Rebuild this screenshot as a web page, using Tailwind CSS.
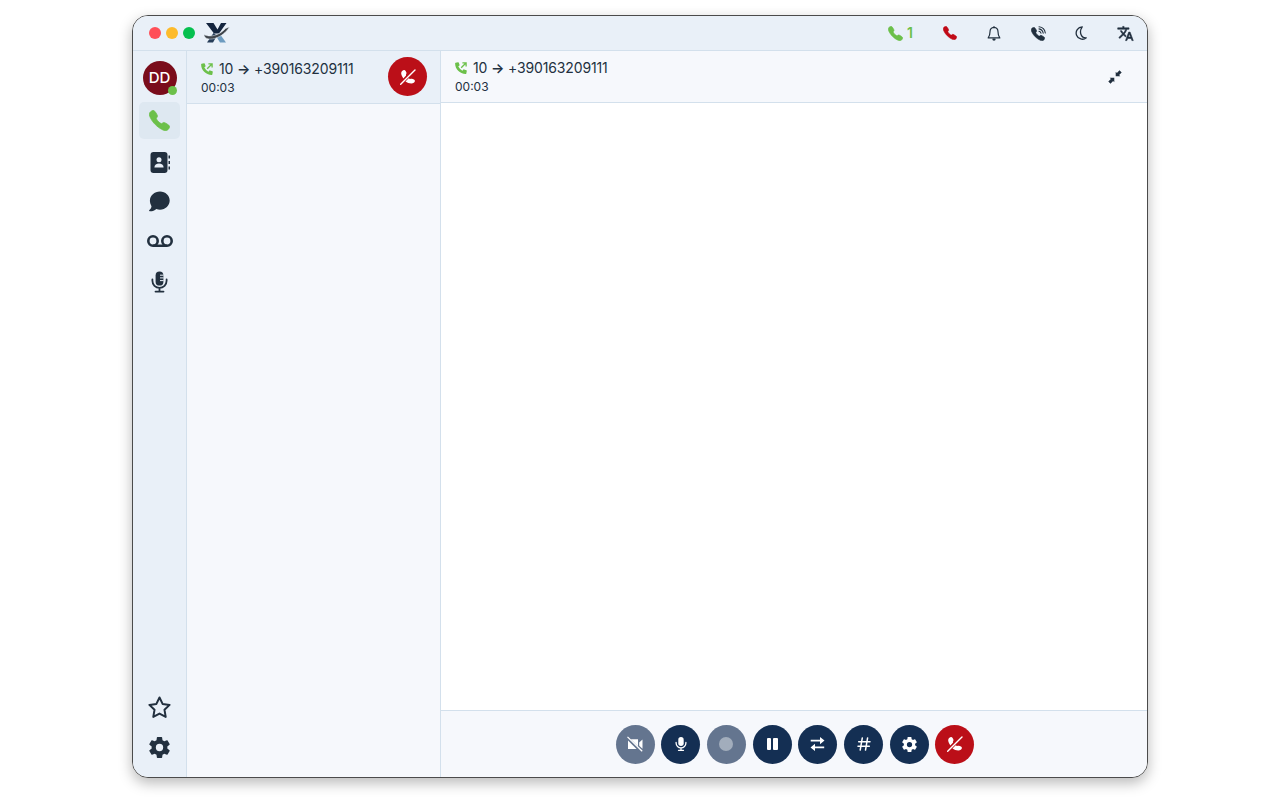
<!DOCTYPE html>
<html lang="en">
  <head>
    <meta charset="UTF-8" />
    <meta name="viewport" content="width=device-width, initial-scale=1.0" />
    <title>Phone</title>
    <script src="https://cdn.jsdelivr.net/npm/@tailwindcss/browser@4"></script>
  </head>
  <body class="h-screen overflow-hidden bg-white font-['Inter',sans-serif] text-[#22303f]">
    <!-- shared icons -->
    <svg class="hidden">
      <symbol id="phone" viewBox="24 24 464 464">
        <path d="M391 480c-19.52 0-46.94-7.06-88-30-49.93-28-88.55-53.85-138.21-103.38C116.91 298.77 93.61 267.79 61 208.45c-36.84-67-30.56-102.12-23.54-117.13C45.82 73.38 58.16 62.65 74.11 52a176.3 176.3 0 0128.64-15.2c1-.43 1.93-.84 2.76-1.21 4.95-2.23 12.45-5.6 21.95-2 6.34 2.38 12 7.25 20.86 16 18.17 17.92 43 57.83 52.16 77.43 6.15 13.21 10.22 21.93 10.23 31.71 0 11.45-5.76 20.28-12.75 29.81-1.31 1.79-2.61 3.5-3.87 5.16-7.61 10-9.28 12.89-8.18 18.05 2.23 10.37 18.86 41.24 46.19 68.51s57.31 42.85 67.72 45.07c5.38 1.15 8.33-.59 18.65-8.47 1.48-1.13 3-2.3 4.59-3.47 10.66-7.93 19.08-13.54 30.26-13.54h.06c9.73 0 18.06 4.22 31.86 11.18 18 9.08 59.11 33.59 77.14 51.78 8.77 8.84 13.66 14.48 16.05 20.81 3.6 9.53.21 17-2 22-.37.83-.78 1.74-1.21 2.75a176.49 176.49 0 01-15.29 28.58c-10.63 15.9-21.4 28.21-39.38 36.58A67.42 67.42 0 01391 480z" stroke="currentColor" stroke-width="18" />
      </symbol>
      <symbol id="outgoing" viewBox="0 0 12 12">
        <path d="M.6.7 3 .2Q3.500.1 3.700.6L4.600 2.900Q4.800 3.300 4.400 3.600L3.300 4.600Q4.700 7.300 7.400 8.700L8.400 7.600Q8.700 7.200 9.100 7.400L11.400 8.300Q11.900 8.500 11.800 9L11.300 11.400Q11.200 11.900 10.700 11.900C4.800 11.900.1 7.200.1 1.300Q.1.800.6.7Z" />
        <path d="M6.200 5.800 10.700 1.300M7.400.9H11.100V4.600" fill="none" stroke="currentColor" stroke-width="1.300" />
      </symbol>
      <symbol id="hangup" viewBox="0 0 16 16">
        <path d="M3.900 1C2.400 1.400.9 2.900 1.200 4.800 1.500 6.500 2.500 7.900 3.300 9.400L6.100 6.600C5.500 5.800 6.400 5.100 6.500 4.300 6.600 3.200 5.100.7 3.900 1ZM5.500 12.400 8.700 9.300C9.800 10.500 10.700 9.700 11.700 9.800 13.200 9.900 15 10.900 14.900 11.900 14.800 13.300 13 14.500 11.200 14.400 9.200 14.300 7.200 13.600 5.500 12.400Z" />
        <path d="M.7 15.300 15 1" stroke="currentColor" stroke-width="1.400" stroke-linecap="round" />
      </symbol>
      <symbol id="cog" viewBox="2 2 20 20">
        <path d="M12,15.5A3.5,3.5 0 0,1 8.5,12A3.5,3.5 0 0,1 12,8.5A3.5,3.5 0 0,1 15.5,12A3.5,3.5 0 0,1 12,15.5M19.43,12.97C19.47,12.65 19.5,12.33 19.5,12C19.5,11.67 19.47,11.34 19.43,11L21.54,9.37C21.73,9.22 21.78,8.95 21.66,8.73L19.66,5.27C19.54,5.05 19.27,4.96 19.05,5.05L16.56,6.05C16.04,5.66 15.5,5.32 14.87,5.07L14.5,2.42C14.46,2.18 14.25,2 14,2H10C9.75,2 9.54,2.18 9.5,2.42L9.13,5.07C8.5,5.32 7.96,5.66 7.44,6.05L4.95,5.05C4.73,4.96 4.46,5.05 4.34,5.27L2.34,8.73C2.21,8.95 2.27,9.22 2.46,9.37L4.57,11C4.53,11.34 4.5,11.67 4.5,12C4.5,12.33 4.53,12.65 4.57,12.97L2.46,14.63C2.27,14.78 2.21,15.05 2.34,15.27L4.34,18.73C4.46,18.95 4.73,19.03 4.95,18.95L7.44,17.94C7.96,18.34 8.5,18.68 9.13,18.93L9.5,21.58C9.54,21.82 9.75,22 10,22H14C14.25,22 14.46,21.82 14.5,21.58L14.87,18.93C15.5,18.67 16.04,18.34 16.56,17.94L19.05,18.95C19.27,19.03 19.54,18.95 19.66,18.73L21.66,15.27C21.78,15.05 21.73,14.78 21.54,14.63L19.43,12.97Z" />
      </symbol>
    </svg>

    <div class="mx-auto mt-[15px] flex h-[763px] w-[1016px] flex-col overflow-hidden rounded-[16px] border border-[#4b4b4b] bg-white shadow-[0_5px_14px_rgba(0,0,0,0.28)]">
      <!-- title bar -->
      <header class="flex h-[35px] shrink-0 items-center border-b border-[#d3e0ec] bg-[#e9f0f8]">
        <div class="ml-4 flex gap-[5px]">
          <span class="size-3 rounded-full bg-[#ff4f58]"></span>
          <span class="size-3 rounded-full bg-[#fdbb2b]"></span>
          <span class="size-3 rounded-full bg-[#05c04f]"></span>
        </div>
        <svg class="ml-[9px] h-[22px] w-[26px]" viewBox="0 0 26 22">
          <path d="M2 1H9.500L13.500 7.500 17 1H22.500L15 11.500H10Z" fill="#14253f" />
          <path d="M9.500 11 13 13.500 9 20.500H3Z" fill="#263d59" />
          <path d="M12 14 15.500 11.500 22 20.500H16Z" fill="#6d9bc0" />
          <path d="M0 12.500C.5 20.500 17.500 18 25.500 5L21.500 6.500C16 13 6 16 0 12.500Z" fill="#3f444b" stroke="#e9f0f8" stroke-width=".5" />
        </svg>
        <div class="ml-auto flex items-center">
          <div class="mr-[12px] flex items-center gap-1 text-[#6cc04a]">
            <svg class="size-[15px] fill-current"><use href="#phone" /></svg>
            <span class="mr-[2px] text-[14px] leading-4 font-semibold">1</span>
          </div>
          <button class="flex w-11 justify-center pl-px text-[#c10a17]">
            <svg class="size-[14px] fill-current"><use href="#phone" /></svg>
          </button>
          <button class="flex w-11 justify-center pl-px">
            <svg class="h-[15px] w-[14px]" viewBox="0 0 14 15" fill="none" stroke="currentColor" stroke-width="1.200" stroke-linejoin="round">
              <path d="M7 1.300C4.300 1.500 3 3.500 3 5.700 3 8.700 2.500 10.200 1.200 11.900H12.800C11.500 10.200 11 8.700 11 5.700 11 3.500 9.700 1.500 7 1.300Z" />
              <path d="M5.900 13A1.100 1.100 0 0 0 8.100 13ZM6.400.9H7.600" fill="currentColor" />
            </svg>
          </button>
          <button class="flex w-11 justify-center pl-[2px]">
            <svg class="size-[15px] fill-current" viewBox="0 0 15 15">
              <use href="#phone" x="0" y="1" width="14" height="14" />
              <path d="M8 5.200A3 3 0 0 1 10 7.200M8 2.900A5.300 5.300 0 0 1 12.200 7.100M8 .8A7.200 7.200 0 0 1 14.300 7" fill="none" stroke="currentColor" stroke-width="1.100" stroke-linecap="round" />
            </svg>
          </button>
          <button class="flex w-11 justify-center pr-px">
            <svg class="h-[14px] w-3" viewBox="0 0 12 14" fill="none" stroke="currentColor" stroke-width="1.300" stroke-linejoin="round">
              <path d="M7.200.8A6.200 6.200 0 1 0 11.300 11.800C6.200 12.200 3.600 6 7.200.8Z" />
            </svg>
          </button>
          <button class="flex w-11 justify-center pl-px">
            <svg class="size-[17px] fill-current" viewBox="0 0 24 24">
              <path d="M12.870 15.070l-2.540-2.510.03-.03A17.520 17.520 0 0014.070 6H17V4h-7V2H8v2H1v2h11.170C11.500 7.920 10.440 9.750 9 11.350 8.070 10.320 7.300 9.190 6.690 8h-2c.73 1.630 1.730 3.170 2.980 4.560l-5.090 5.020L4 19l5-5 3.110 3.110.76-2.040zM18.500 10h-2L12 22h2l1.120-3h4.750L21 22h2l-4.500-12zm-2.620 7l1.620-4.330L19.120 17h-3.240z" stroke="currentColor" stroke-width=".8" />
            </svg>
          </button>
        </div>
      </header>

      <div class="flex min-h-0 flex-1">
        <!-- navigation rail -->
        <nav class="flex w-[54px] shrink-0 flex-col items-center border-r border-[#d3e0ec] bg-[#e9f0f8] pt-[10px] pb-[9px]">
          <div class="relative flex size-[34px] shrink-0 items-center justify-center rounded-full bg-[#7a0c1b] text-[15px] font-medium text-white">
            DD
            <span class="absolute right-0 bottom-0 size-[9px] rounded-full bg-[#6cc04a]"></span>
          </div>
          <button class="mt-[7px] flex h-[37px] w-[41px] shrink-0 items-center justify-center rounded-[5px] bg-[#dee8f1] text-[#6cc04a]">
            <svg class="size-[21px] fill-current"><use href="#phone" /></svg>
          </button>
          <button class="mt-[3px] flex h-10 items-center">
            <svg class="h-[21px] w-5" viewBox="0 0 20 21" fill="currentColor">
              <rect x="0.500" y="0" width="17" height="21" rx="3" />
              <path d="M18.500 3.500H20V6.500H18.500ZM18.500 9H20V12H18.500ZM18.500 14.500H20V17.500H18.500Z" />
              <circle cx="9" cy="7.800" r="2.500" fill="#e9f0f8" />
              <path d="M4.400 15.500C4.400 12.900 6.500 11.500 9 11.500S13.600 12.900 13.600 15.500Z" fill="#e9f0f8" />
            </svg>
          </button>
          <button class="-mt-px flex h-10 items-center">
            <svg class="h-[21px] w-[21px]" viewBox="0 0 21 21" fill="currentColor">
              <path d="M11 .5C16.500.5 20.700 4.500 20.700 9.600S16.500 18.700 11 18.700C9.700 18.700 8.500 18.500 7.300 18 5.500 19.500 3.200 20.500.7 20.300 0 20.200-.1 19.600.4 19.100 1.500 18 2.300 16.800 2.500 15.200 1.500 13.600.9 11.800.9 9.600.9 4.500 5.400.5 11 .5Z" />
            </svg>
          </button>
          <button class="flex h-10 items-center">
            <svg class="h-[13px] w-[26px]" viewBox="0 0 26 13" fill="none" stroke="currentColor" stroke-width="2.600">
              <circle cx="6" cy="6" r="4.700" />
              <circle cx="20" cy="6" r="4.700" />
              <path d="M6 10.700H20" />
            </svg>
          </button>
          <button class="mt-px flex h-10 items-center">
            <svg class="h-[22px] w-[17px]" viewBox="0 0 17 22" fill="none" stroke="currentColor">
              <rect x="4.600" y=".6" width="7.800" height="14" rx="3.900" fill="currentColor" stroke="none" />
              <path d="M9 4.200H12.600M9 6.900H12.600M9 9.600H12.600" stroke="#e9f0f8" stroke-width="1" />
              <path d="M1.400 8.500V9.800A7.100 7.100 0 0 0 15.600 9.800V8.500M8.500 17V20.500M4.500 20.600H12.500" stroke-width="1.800" stroke-linecap="round" />
            </svg>
          </button>
          <button class="mt-auto flex h-10 shrink-0 items-center">
            <svg class="size-[23px]" viewBox="0 0 23 23" fill="none" stroke="currentColor" stroke-width="2" stroke-linejoin="round">
              <path d="M11.500 1.500 14.600 7.900 21.600 8.900 16.500 13.800 17.700 20.900 11.500 17.600 5.300 20.900 6.500 13.800 1.400 8.900 8.400 7.900Z" />
            </svg>
          </button>
          <button class="flex h-[41px] shrink-0 items-center">
            <svg class="size-[21px] fill-current"><use href="#cog" /></svg>
          </button>
        </nav>

        <!-- active calls -->
        <aside class="w-[254px] shrink-0 border-r border-[#d3e0ec] bg-[#f6f8fc]">
          <div class="flex h-[53px] items-center justify-between border-b border-[#d3e0ec] bg-[#e9f0f8] pr-[13px] pl-[14px]">
            <div class="pt-[2px]">
              <div class="flex items-center gap-[6px] text-[14px] leading-[19px] tracking-[-0.01em]">
                <svg class="size-3 fill-current text-[#6cc04a]"><use href="#outgoing" /></svg>
                <span>10 <span class="font-semibold">→</span> +390163209111</span>
              </div>
              <div class="mt-px text-[12px] leading-[18px]">00:03</div>
            </div>
            <button class="mb-px flex size-[39px] items-center justify-center rounded-full bg-[#bb0f18] text-white">
              <svg class="size-4 fill-current"><use href="#hangup" /></svg>
            </button>
          </div>
        </aside>

        <!-- current call -->
        <main class="flex min-w-0 flex-1 flex-col">
          <div class="flex h-[52px] shrink-0 items-center justify-between border-b border-[#d3e0ec] bg-[#f6f8fc] pr-[25px] pl-[14px]">
            <div class="pt-px">
              <div class="flex items-center gap-[6px] text-[14px] leading-[19px] tracking-[-0.01em]">
                <svg class="mt-px size-3 fill-current text-[#6cc04a]"><use href="#outgoing" /></svg>
                <span>10 <span class="font-semibold">→</span> +390163209111</span>
              </div>
              <div class="mt-px text-[12px] leading-[18px]">00:03</div>
            </div>
            <svg class="size-[14px] fill-current" viewBox="0 0 14 14">
              <path d="M7.700 1.700V6.300H12.300L11.100 5.100 13.700 2.500 11.500.3 8.900 2.900ZM6.300 12.300V7.700H1.700L2.900 8.900.3 11.500 2.500 13.700 5.100 11.100Z" />
            </svg>
          </div>
          <div class="flex-1 bg-white"></div>
          <footer class="flex h-[67px] shrink-0 items-center justify-center gap-[6.700px] border-t border-[#d3e0ec] bg-[#f6f8fc] pl-[2px] text-white">
            <button class="flex size-[39px] items-center justify-center rounded-full bg-[#64758f]">
              <svg class="size-4" viewBox="0 0 16 16" fill="currentColor">
                <path d="M1 3.200H11V13H1ZM12.200 6.500 15.500 3.500V12.800L12.200 9.800Z" />
                <path d="M.2 1.700 14.200 15.500" stroke="#64758f" stroke-width="3" />
                <path d="M.5.9 15.200 15.300" stroke="currentColor" stroke-width="1.300" />
              </svg>
            </button>
            <button class="flex size-[39px] items-center justify-center rounded-full bg-[#142f53]">
              <svg class="h-[14px] w-3" viewBox="0 0 12 14" fill="none" stroke="currentColor" stroke-width="1.300" stroke-linecap="round">
                <rect x="3.300" y="0" width="5.400" height="9" rx="2.700" fill="currentColor" stroke="none" />
                <path d="M1.100 5.500V6A4.900 4.900 0 0 0 10.900 6V5.500M6 11V13.200M3.500 13.300H8.500" />
              </svg>
            </button>
            <button class="flex size-[39px] items-center justify-center rounded-full bg-[#64758f]">
              <span class="size-[14px] rounded-full bg-[#a2adbc]"></span>
            </button>
            <button class="flex size-[39px] items-center justify-center gap-[2px] rounded-full bg-[#142f53]">
              <span class="h-3 w-[4.500px] rounded-[1px] bg-white"></span>
              <span class="h-3 w-[4.500px] rounded-[1px] bg-white"></span>
            </button>
            <button class="flex size-[39px] items-center justify-center rounded-full bg-[#142f53]">
              <svg class="h-[14px] w-[15px]" viewBox="0 0 15 14" fill="currentColor">
                <path d="M10 0 14.500 3.600 10 7.200V4.500H.7V2.700H10ZM5 6.800.5 10.400 5 14V11.300H14.200V9.500H5Z" />
              </svg>
            </button>
            <button class="flex size-[39px] items-center justify-center rounded-full bg-[#142f53]">
              <svg class="size-[14px]" viewBox="0 0 14 14" fill="none" stroke="currentColor" stroke-width="1.500" stroke-linecap="round">
                <path d="M5.300.9 3.200 13.100M10.600.9 8.500 13.100M1.700 4.700H13M1 9.300H12.300" />
              </svg>
            </button>
            <button class="flex size-[39px] items-center justify-center rounded-full bg-[#142f53]">
              <svg class="size-[15px] fill-current"><use href="#cog" /></svg>
            </button>
            <button class="flex size-[39px] items-center justify-center rounded-full bg-[#bb0f18]">
              <svg class="size-4 fill-current"><use href="#hangup" /></svg>
            </button>
          </footer>
        </main>
      </div>
    </div>
  </body>
</html>
